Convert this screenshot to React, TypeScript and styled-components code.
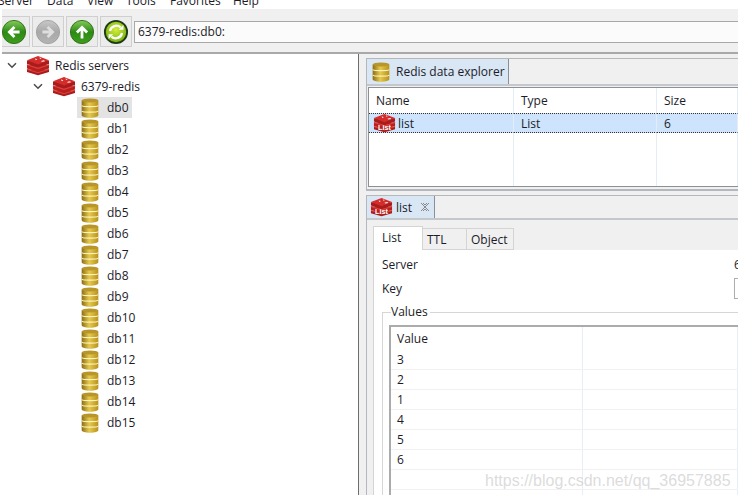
import styled, { createGlobalStyle } from "styled-components";

const GlobalStyle = createGlobalStyle`
  html, body {
    margin: 0;
    padding: 0;
    background: #fff;
  }
  * {
    box-sizing: border-box;
  }
`;

const Page = styled.div`
  position: relative;
  width: 738px;
  height: 499px;
  overflow: hidden;
  background: #fff;
  color: #1c1c28;
  font-family: "Open Sans", "Noto Sans", sans-serif;
  font-size: 12px;
`;
const MenuBar = styled.div`
  display: flex;
  align-items: flex-end;
  height: 9px;
  overflow: hidden;
  margin-left: -2px;
`;
const MenuItem = styled.span<{ $width: number }>`
  flex: none;
  width: ${(props) => props.$width}px;
  line-height: 16px;
`;
const Toolbar = styled.div`
  display: flex;
  align-items: center;
  gap: 2px;
  height: 45px;
  margin-left: 2px;
  padding-top: 2px;
  overflow: hidden;
  background: #f0f0f0;
  border-bottom: 2px solid #a9a9a9;
`;
const ToolButton = styled.div`
  display: flex;
  align-items: center;
  justify-content: center;
  flex: none;
  width: 32px;
  height: 31px;
  background: #ececec;
  border: 1px solid #cfcfcf;
  &:first-child {
    margin-left: -4px;
  }
`;
const Address = styled.div`
  flex: 1;
  height: 22px;
  padding-left: 3px;
  line-height: 20px;
  background: #fbfbfb;
  border: 1px solid #a8a8a8;
  border-right: 0;
`;
const Body = styled.div`
  display: flex;
  height: 441px;
  overflow: hidden;
`;
const Tree = styled.div`
  flex: none;
  width: 359px;
  padding-top: 1px;
  background: #fff;
  border-right: 1px solid #6e6e6e;
`;
const TreeRow = styled.div<{ $indent: number }>`
  display: flex;
  align-items: center;
  height: 21px;
  padding-left: ${(props) => props.$indent}px;
`;
const Chevron = styled.span`
  display: flex;
  flex: none;
  width: 20px;
  margin-right: 4px;
  justify-content: center;
`;
const IconSlot = styled.span<{ $gap: number }>`
  display: flex;
  flex: none;
  align-items: center;
  margin-right: ${(props) => props.$gap}px;
`;
const DbLabel = styled.div<{ $selected: boolean }>`
  display: flex;
  align-items: center;
  width: 55px;
  height: 21px;
  padding-left: 4px;
  background: ${(props) => (props.$selected ? "#e3e3e3" : "transparent")};
`;
const Right = styled.div`
  flex: 1;
  display: flex;
  flex-direction: column;
  padding: 4px 0 0 7px;
  background: #f0f0f0;
  min-width: 0;
`;
const Panel = styled.div<{ $height: number; $open?: boolean }>`
  flex: none;
  display: flex;
  flex-direction: column;
  height: ${(props) => props.$height}px;
  background: #f0f0f0;
  border: 1px solid #b4b8bc;
  border-right: 0;
  border-bottom-width: ${(props) => (props.$open ? 0 : 2)}px;
  margin-bottom: 4px;
`;
const TabStrip = styled.div<{ $height: number }>`
  display: flex;
  flex: none;
  height: ${(props) => props.$height}px;
  border-bottom: 2px solid #c4c8cc;
`;
const PanelTab = styled.div<{ $width: number; $pad: number }>`
  display: flex;
  align-items: center;
  flex: none;
  width: ${(props) => props.$width}px;
  padding-left: ${(props) => props.$pad}px;
  background: #d9e6f4;
  border-right: 1px solid #8a9098;
`;
const Close = styled.span`
  display: flex;
  margin-left: 8px;
`;
const ExplorerTable = styled.div`
  flex: 1;
  display: grid;
  grid-template-columns: 145px 143px 1fr;
  grid-template-rows: 25px 20px 1fr;
  margin: 1px 0 2px 1px;
  background: #fff;
  border: 1px solid #8d9196;
  border-right: 0;
`;
const Cell = styled.div<{ $selected?: boolean }>`
  display: flex;
  align-items: center;
  padding-left: 7px;
  background: ${(props) => (props.$selected ? "#cde4fc" : "#fff")};
  border-right: 1px solid #e4edf7;
  border-top: ${(props) => (props.$selected ? "1px dotted #333" : "0")};
  border-bottom: ${(props) => (props.$selected ? "1px dotted #333" : "0")};
`;
const RowIcon = styled.span`
  display: flex;
  margin: 0 2px 0 -3px;
`;
const InnerArea = styled.div`
  flex: 1;
  display: flex;
  flex-direction: column;
  padding: 6px 0 0 6px;
  min-height: 0;
`;
const InnerTabs = styled.div`
  display: flex;
  align-items: flex-end;
  flex: none;
  height: 24px;
`;
const InnerTab = styled.div<{ $active?: boolean; $width: number }>`
  flex: none;
  width: ${(props) => props.$width}px;
  height: ${(props) => (props.$active ? 24 : 22)}px;
  padding-left: ${(props) => (props.$active ? 8 : 4)}px;
  line-height: 21px;
  background: ${(props) => (props.$active ? "#fff" : "#f0f0f0")};
  border: 1px solid #d4d4d4;
  border-left-width: ${(props) => (props.$active ? 1 : 0)}px;
  border-bottom-width: ${(props) => (props.$active ? 0 : 1)}px;
`;
const InnerBody = styled.div`
  flex: 1;
  padding: 2px 0 0 8px;
  background: #fff;
  border-left: 1px solid #d4d4d4;
  min-height: 0;
`;
const FormGrid = styled.div`
  display: grid;
  grid-template-columns: 352px 1fr;
  grid-template-rows: 24px 24px;
  align-items: center;
`;
const KeyInput = styled.div`
  width: 10px;
  height: 21px;
  background: #fff;
  border: 1px solid #adadad;
  border-right: 0;
`;
const GroupBox = styled.fieldset`
  margin: 5px 0 0;
  padding: 6px 0 0 6px;
  border: 0;
  border-top: 1px solid #d6d6d6;
  border-left: 1px solid #d6d6d6;
`;
const GroupLegend = styled.legend`
  margin-left: 2px;
  padding: 0 2px 0 0;
  line-height: 14px;
`;
const ValuesTable = styled.div`
  height: 200px;
  border: 2px solid #ababab;
  border-right: 0;
  border-bottom: 0;
`;
const ValueRow = styled.div<{ $header?: boolean }>`
  display: grid;
  grid-template-columns: 192px 1fr;
  height: ${(props) => (props.$header ? 23 : 20)}px;
  border-bottom: ${(props) => (props.$header ? "0" : "1px solid #f1f1f1")};
`;
const ValueCell = styled.div`
  display: flex;
  align-items: center;
  padding-left: 6px;
  border-right: 1px solid #e8eef5;
`;
const Watermark = styled.div`
  position: absolute;
  left: 485px;
  top: 470px;
  color: rgba(190, 190, 190, 0.55);
  font-family: "Liberation Sans", Arial, sans-serif;
  font-size: 16px;
  line-height: 22px;
  white-space: nowrap;
`;

function ArrowButton({ dir, disabled }: { dir: "left" | "right" | "up"; disabled?: boolean }) {
  const id = `arrow-${dir}`;
  const arrow = {
    left: "M20 14H9M14.500 8.500L9 14L14.500 19.500",
    right: "M8 14H19M13.500 8.500L19 14L13.500 19.500",
    up: "M14 21V9M8.500 14.500L14 9L19.500 14.500",
  }[dir];
  return (
    <svg width="26" height="26" viewBox="0 0 28 28">
      <defs>
        <linearGradient id={id} x1="0" y1="0" x2="0" y2="1">
          <stop offset="0" stopColor={disabled ? "#c8c8c8" : "#86cc5a"} />
          <stop offset="0.5" stopColor={disabled ? "#a8a8a8" : "#2c8a14"} />
          <stop offset="1" stopColor={disabled ? "#b4b4b4" : "#3f9e1e"} />
        </linearGradient>
      </defs>
      <circle cx="14" cy="14" r="12.500" fill={`url(#${id})`} stroke={disabled ? "#a0a0a0" : "#2d6e18"} />
      <path d={arrow} fill="none" stroke={disabled ? "#dedede" : "#fff"} strokeWidth="3" />
    </svg>
  );
}

function RefreshIcon() {
  return (
    <svg width="26" height="26" viewBox="0 0 28 28">
      <defs>
        <radialGradient id="refresh" cx="0.5" cy="0.4" r="0.6">
          <stop offset="0" stopColor="#d4ee3a" />
          <stop offset="1" stopColor="#6fae10" />
        </radialGradient>
      </defs>
      <circle cx="14" cy="14" r="12" fill="url(#refresh)" stroke="#1f3a1a" strokeWidth="2" />
      <path d="M7.500 13a7 7 0 0 1 11.500-4" fill="none" stroke="#fff" strokeWidth="2.400" />
      <path d="M20.500 15a7 7 0 0 1-11.500 4" fill="none" stroke="#fff" strokeWidth="2.400" />
      <path d="M17 11.500h5v-5zM11 16.500H6v5z" fill="#fff" />
    </svg>
  );
}

function RedisIcon({ size = 24, list }: { size?: number; list?: boolean }) {
  return (
    <svg width={size} height={size * 0.85} viewBox="0 0 24 20.400">
      <path d="M1 14.500V17l11 3.200L23 17v-2.500z" fill="#a81c1c" />
      <path d="M1 10v3.500l11 3.500 11-3.500V10z" fill="#b82020" />
      <path d="M1 5.500V9l11 3.500L23 9V5.500z" fill="#a81c1c" />
      <path d="M1 5.200L12 1l11 4.200L12 9.600z" fill="#d42c2a" />
      <path d="M1 9.800L12 13.400 23 9.800M1 14.200L12 17.800 23 14.200" fill="none" stroke="#e0403a" strokeWidth="1.100" />
      <path d="M9 3.600l2.400.700-1.600 1zM13.600 2.600l2 .600-1.600.800zM15 6l3-.800 1 1-3 .600z" fill="#fff" />
      {list && (
        <text x="12" y="18" textAnchor="middle" fontSize="7.500" fontWeight="700" fontFamily="Liberation Sans, sans-serif" fill="#fff">
          List
        </text>
      )}
    </svg>
  );
}

function DbIcon({ id }: { id: string }) {
  return (
    <svg width="18" height="20" viewBox="0 0 18 20.400">
      <defs>
        <linearGradient id={id} x1="0" y1="0" x2="1" y2="0">
          <stop offset="0" stopColor="#8a6d14" />
          <stop offset="0.45" stopColor="#e6c94e" />
          <stop offset="1" stopColor="#b8921e" />
        </linearGradient>
      </defs>
      <path d="M0.500 2.500v15.200C0.500 19 4 20.200 9 20.200s8.500-1.200 8.500-2.500V2.500z" fill={`url(#${id})`} />
      <ellipse cx="9" cy="2.500" rx="8.500" ry="2" fill="#b8962a" />
      <path d="M0.500 7.800C2 9.200 16 9.200 17.500 7.800M0.500 13.400C2 14.800 16 14.800 17.500 13.400" fill="none" stroke="#fdf3b8" strokeWidth="1.200" />
    </svg>
  );
}

function ChevronDown() {
  return (
    <svg width="10" height="7" viewBox="0 0 10 7">
      <path d="M1 1.200L5 5.200 9 1.200" fill="none" stroke="#4a4a4a" strokeWidth="1.500" />
    </svg>
  );
}

const menus: [string, number][] = [
  ["Server", 49],
  ["Data", 40],
  ["View", 39],
  ["Tools", 44],
  ["Favorites", 63],
  ["Help", 40],
];
const databases = Array.from({ length: 16 }, (_, i) => `db${i}`);
const values = ["3", "2", "1", "4", "5", "6", "", ""];

export default function App() {
  return (
    <Page>
      <GlobalStyle />
      <MenuBar>
        {menus.map(([name, width]) => (
          <MenuItem key={name} $width={width}>
            {name}
          </MenuItem>
        ))}
      </MenuBar>
      <Toolbar>
        <ToolButton>
          <ArrowButton dir="left" />
        </ToolButton>
        <ToolButton>
          <ArrowButton dir="right" disabled />
        </ToolButton>
        <ToolButton>
          <ArrowButton dir="up" />
        </ToolButton>
        <ToolButton>
          <RefreshIcon />
        </ToolButton>
        <Address>6379-redis:db0:</Address>
      </Toolbar>
      <Body>
        <Tree>
          <TreeRow $indent={2}>
            <Chevron>
              <ChevronDown />
            </Chevron>
            <IconSlot $gap={5}>
              <RedisIcon />
            </IconSlot>
            Redis servers
          </TreeRow>
          <TreeRow $indent={28}>
            <Chevron>
              <ChevronDown />
            </Chevron>
            <IconSlot $gap={5}>
              <RedisIcon />
            </IconSlot>
            6379-redis
          </TreeRow>
          {databases.map((db, i) => (
            <TreeRow key={db} $indent={77}>
              <DbLabel $selected={i === 0}>
                <IconSlot $gap={8}>
                  <DbIcon id={`tree-${db}`} />
                </IconSlot>
                {db}
              </DbLabel>
            </TreeRow>
          ))}
        </Tree>
        <Right>
          <Panel $height={133}>
            <TabStrip $height={27}>
              <PanelTab $width={142} $pad={5}>
                <IconSlot $gap={6}>
                  <DbIcon id="explorer-db" />
                </IconSlot>
                Redis data explorer
              </PanelTab>
            </TabStrip>
            <ExplorerTable>
              <Cell>Name</Cell>
              <Cell>Type</Cell>
              <Cell>Size</Cell>
              <Cell $selected>
                <RowIcon>
                  <RedisIcon size={23} list />
                </RowIcon>
                list
              </Cell>
              <Cell $selected>List</Cell>
              <Cell $selected>6</Cell>
              <Cell />
              <Cell />
              <Cell />
            </ExplorerTable>
          </Panel>
          <Panel $height={300} $open>
            <TabStrip $height={24}>
              <PanelTab $width={68} $pad={3}>
                <IconSlot $gap={3}>
                  <RedisIcon size={23} list />
                </IconSlot>
                list
                <Close>
                  <svg width="10" height="10" viewBox="0 0 10 10">
                    <path d="M1 1l8 8M9 1L1 9M3 1l2 2 2-2M3 9l2-2 2 2" fill="none" stroke="#8a8a8a" strokeWidth="1" />
                  </svg>
                </Close>
              </PanelTab>
            </TabStrip>
            <InnerArea>
              <InnerTabs>
                <InnerTab $active $width={50}>
                  List
                </InnerTab>
                <InnerTab $width={44}>TTL</InnerTab>
                <InnerTab $width={47}>Object</InnerTab>
              </InnerTabs>
              <InnerBody>
                <FormGrid>
                  <span>Server</span>
                  <span>6</span>
                  <span>Key</span>
                  <KeyInput />
                </FormGrid>
                <GroupBox>
                  <GroupLegend>Values</GroupLegend>
                  <ValuesTable>
                    <ValueRow $header>
                      <ValueCell>Value</ValueCell>
                      <ValueCell />
                    </ValueRow>
                    {values.map((value, i) => (
                      <ValueRow key={i}>
                        <ValueCell>{value}</ValueCell>
                        <ValueCell />
                      </ValueRow>
                    ))}
                  </ValuesTable>
                </GroupBox>
              </InnerBody>
            </InnerArea>
          </Panel>
        </Right>
      </Body>
      <Watermark>https://blog.csdn.net/qq_36957885</Watermark>
    </Page>
  );
}
